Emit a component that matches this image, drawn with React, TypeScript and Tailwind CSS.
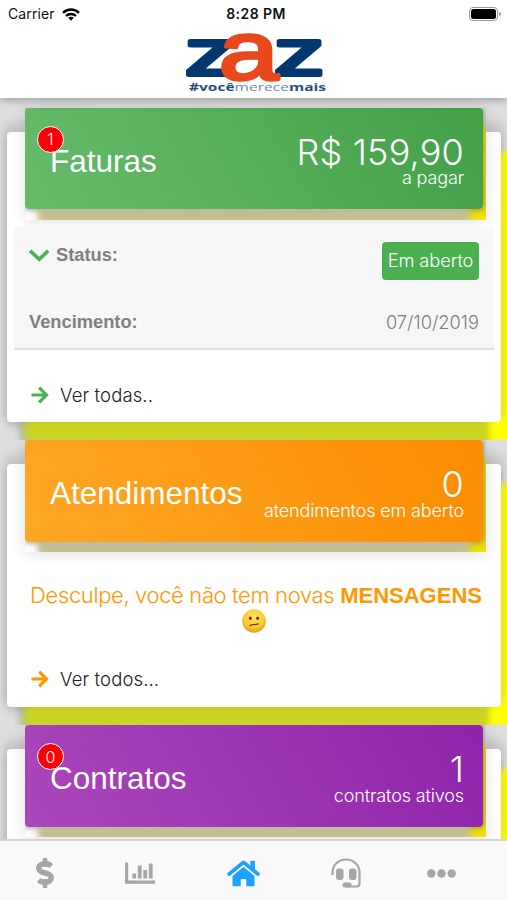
import type { ReactNode } from "react";
import { FaDollarSign, FaHome } from "react-icons/fa";

interface BannerProps {
  titulo: string;
  valor: string;
  legenda: string;
  cor: string;
  badge?: string;
}

function Banner({ titulo, valor, legenda, cor, badge }: BannerProps) {
  return (
    <div className="-mt-6 ml-[18px] h-28 w-[461px] shrink-0 overflow-hidden shadow-[0_2px_14px_rgba(0,0,0,0.12)]">
      <div
        className={`relative flex h-[101.5px] w-[458px] items-start justify-between rounded-[4px] pr-[19px] pl-[25px] text-white shadow-[0_27px_7px_-13px_rgba(192,188,156,0.97),0_0_5px_2px_rgba(110,110,110,0.5),15px_16px_6px_-2px_#f0e000] ${cor}`}
      >
        <h2 className="mt-[34px] text-[31.5px] leading-[38px]">{titulo}</h2>
        <div className="mt-[22px] flex flex-col items-end font-['Inter','Liberation_Sans',sans-serif] font-light">
          <span className="text-[36px] leading-[44px] tracking-[0.2px]">{valor}</span>
          <span className="-mt-[6.5px] text-[18px] leading-[22px] tracking-[-0.14px]">{legenda}</span>
        </div>
        {badge && (
          <span className="absolute top-[18px] left-[12px] flex size-[27px] items-center justify-center rounded-full border border-white bg-[#fb0007] font-['Inter','Liberation_Sans',sans-serif] text-[16px] font-light">
            {badge}
          </span>
        )}
      </div>
    </div>
  );
}

function Card({ className, children }: { className: string; children: ReactNode }) {
  return (
    <div
      className={`mr-[6px] ml-[7px] flex flex-col rounded-[4px] bg-white shadow-[0_34px_6px_-12px_rgba(125,145,85,0.4),0_-6px_7px_4px_rgba(120,100,130,0.17),18px_20px_6px_0px_#ffff00,0_4px_10px_rgba(0,0,0,0.16)] ${className}`}
    >
      {children}
    </div>
  );
}

function VerMais({ cor, children }: { cor: string; children: ReactNode }) {
  return (
    <a className="flex items-center pl-6 font-['Inter','Liberation_Sans',sans-serif] text-[18.5px] leading-6 font-light tracking-[0.12px] text-[#222]">
      <svg className={`mr-[11px] h-[18px] w-[18px] ${cor}`} viewBox="0 0 18 18" fill="none" stroke="currentColor" strokeWidth="3.2">
        <path d="M0.5 9H15.5M8.2 1.7L15.5 9L8.2 16.3" />
      </svg>
      {children}
    </a>
  );
}

function Logo() {
  return (
    <svg className="mx-auto h-[66px] w-[150px] overflow-visible" viewBox="0 0 150 66">
      <g fontFamily="'Liberation Sans', sans-serif" strokeLinejoin="round">
        <text transform="translate(6 46.9) scale(1.55 1)" fontSize="65" fill="#04376f" stroke="#04376f" strokeWidth="4">
          z
        </text>
        <text transform="translate(95 46.9) scale(1.55 1)" fontSize="65" fill="#04376f" stroke="#04376f" strokeWidth="4">
          z
        </text>
        <text transform="translate(40 51.3) scale(1.3 1)" fontSize="82" fill="#e8481c" stroke="#e8481c" strokeWidth="3.6">
          a
        </text>
      </g>
      <text x="10" y="63" fontFamily="'Open Sans', sans-serif" fontSize="11" fill="#2b4c80" textLength="137" lengthAdjust="spacingAndGlyphs">
        <tspan fontWeight="bold">#você</tspan>
        <tspan fill="#7288ab">merece</tspan>
        <tspan fontWeight="bold">mais</tspan>
      </text>
    </svg>
  );
}

function Confuso() {
  return (
    <svg className="mr-[4px] size-6" viewBox="0 0 24 24">
      <defs>
        <radialGradient id="rosto" cx="50%" cy="35%" r="65%">
          <stop offset="0" stopColor="#ffe75c" />
          <stop offset="0.65" stopColor="#fdca35" />
          <stop offset="1" stopColor="#e79a14" />
        </radialGradient>
      </defs>
      <circle cx="12" cy="12" r="11.8" fill="url(#rosto)" />
      <ellipse cx="8.3" cy="9.2" rx="1.4" ry="1.8" fill="#5b3511" />
      <ellipse cx="15.6" cy="9.2" rx="1.4" ry="1.8" fill="#5b3511" />
      <path d="M7.8 16.7C10 14.9 13 16.2 16.3 14.9" fill="none" stroke="#6b3d11" strokeWidth="1.2" strokeLinecap="round" />
    </svg>
  );
}

export default function App() {
  return (
    <div className="flex h-[900px] w-[507px] flex-col overflow-hidden bg-[#dedede] font-['Liberation_Sans',Arial,sans-serif]">
      <header className="z-10 h-[98px] shrink-0 bg-white shadow-[0_1px_9px_rgba(0,0,0,0.35)]">
        <div className="flex h-[28px] items-center justify-between px-2 font-['Inter',sans-serif] text-[14px] leading-[18px] text-[#111]">
          <div className="flex flex-1 items-center gap-[7px]">
            <span className="tracking-[0.1px]">Carrier</span>
            <svg className="h-[13px] w-[18px]" viewBox="0 0 18 13" fill="none" stroke="#000" strokeWidth="2.4">
              <path d="M1 4.8C5.5 0.4 12.5 0.4 17 4.8" />
              <path d="M4 8C6.8 5.3 11.2 5.3 14 8" />
              <path d="M6.2 9.8C7.8 8.4 10.2 8.4 11.8 9.8L9 12.8Z" fill="#000" stroke="none" />
            </svg>
          </div>
          <span className="ml-[3px] font-semibold tracking-[0.45px] whitespace-nowrap">8:28 PM</span>
          <div className="-mr-[2px] flex flex-1 items-center justify-end gap-px">
            <div className="h-[14px] w-[29px] rounded-[4px] border border-[#999] p-px">
              <div className="h-full rounded-[2.5px] bg-black" />
            </div>
            <div className="h-1 w-[2px] rounded-r-full bg-[#999]" />
          </div>
        </div>
        <Logo />
      </header>

      <main className="flex flex-1 flex-col overflow-hidden">
        <section className="h-[342px] shrink-0 overflow-hidden pt-[33.5px]">
          <Card className="h-[290.5px]">
            <Banner
              titulo="Faturas"
              valor="R$ 159,90"
              legenda="a pagar"
              badge="1"
              cor="bg-[linear-gradient(60deg,#66bb6a,#43a047)]"
            />
            <div className="mx-[7px] mt-[7px] flex h-[123px] flex-col border-b-2 border-[#e0e0e0] bg-[#f7f7f7] px-[15px] text-[18.3px] text-[#808080]">
              <div className="flex h-[76.5px] items-start justify-between pt-[15.5px]">
                <div className="flex items-center pt-[2px] leading-[22px] font-bold">
                  <svg className="mr-[6px] h-[13px] w-[21px] text-[#4caf50]" viewBox="0 0 21 13" fill="none" stroke="currentColor" strokeWidth="3.6">
                    <path d="M1.2 1.8L10.2 10.3L19.2 1.8" />
                  </svg>
                  Status:
                </div>
                <span className="flex h-[38px] w-[97px] items-center justify-center rounded-[4px] bg-[#4caf50] font-['Inter','Liberation_Sans',sans-serif] font-light tracking-[-0.1px] whitespace-nowrap text-white">
                  Em aberto
                </span>
              </div>
              <div className="flex items-center justify-between pt-[7.5px] leading-[22px]">
                <span className="font-bold">Vencimento:</span>
                <span className="font-['Inter','Liberation_Sans',sans-serif] font-light tracking-[0px]">07/10/2019</span>
              </div>
            </div>
            <div className="mt-[33px]">
              <VerMais cor="text-[#4caf50]">Ver todas..</VerMais>
            </div>
          </Card>
        </section>

        <section className="h-[285px] shrink-0 overflow-hidden pt-6">
          <Card className="h-[243px]">
            <Banner
              titulo="Atendimentos"
              valor="0"
              legenda="atendimentos em aberto"
              cor="bg-[linear-gradient(60deg,#ffa726,#fb8c00)]"
            />
            <div className="mt-[30px] flex flex-col items-center pl-[4px] text-[22px] leading-[27px] text-[#ff9800]">
              <p className="whitespace-nowrap">
                <span className="font-['Inter','Liberation_Sans',sans-serif] font-light tracking-[-0.37px]">
                  Desculpe, você não tem novas{" "}
                </span>
                <strong>MENSAGENS</strong>
              </p>
              <Confuso />
            </div>
            <div className="mt-[34px]">
              <VerMais cor="text-[#ff9800]">Ver todos...</VerMais>
            </div>
          </Card>
        </section>

        <section className="h-[285px] shrink-0 overflow-hidden pt-6">
          <Card className="h-[243px]">
            <Banner
              titulo="Contratos"
              valor="1"
              legenda="contratos ativos"
              badge="0"
              cor="bg-[linear-gradient(60deg,#ab47bc,#8e24aa)]"
            />
          </Card>
        </section>
      </main>

      <nav className="flex h-[61px] shrink-0 items-center gap-[65px] border-t-2 border-[#d2d2d2] bg-[#fafafa] pt-[5px] pl-[30px] text-[#a6a6a6]">
        <FaDollarSign className="size-[30px] shrink-0" stroke="currentColor" strokeWidth="16" />
        <svg className="h-[22px] w-[30px] shrink-0" viewBox="0 0 30 22" fill="currentColor">
          <path d="M0 0.5H3.2V18.6H30V21.8H0Z" />
          <rect x="7.3" y="11.5" width="3.8" height="5" />
          <rect x="12.8" y="3.5" width="3.8" height="13" />
          <rect x="18.3" y="8" width="3.8" height="8.5" />
          <rect x="23.8" y="1.5" width="3.8" height="15" />
        </svg>
        <FaHome className="mx-[7px] size-[33px] shrink-0 text-[#1ea1ff]" />
        <svg className="-mr-px -ml-px h-[30px] w-[30px] shrink-0" viewBox="0 0 30 30" fill="none" stroke="currentColor" strokeWidth="2.2">
          <path d="M1.5 17V14.5C1.5 7 7.5 1.5 15 1.5S28.5 7 28.5 14.5V25.5A3 3 0 0 1 25.5 28.5H15" />
          <rect x="5" y="10.5" width="7.5" height="11.5" rx="3" fill="currentColor" stroke="none" />
          <rect x="18" y="10.5" width="7.5" height="11.5" rx="3" fill="currentColor" stroke="none" />
          <rect x="11.5" y="24.4" width="9" height="5.2" rx="2.5" fill="currentColor" stroke="none" />
        </svg>
        <svg className="ml-[2px] h-[9px] w-[29px] shrink-0" viewBox="0 0 29 9" fill="currentColor">
          <circle cx="4.3" cy="4.5" r="4.2" />
          <circle cx="14.5" cy="4.5" r="4.2" />
          <circle cx="24.7" cy="4.5" r="4.2" />
        </svg>
      </nav>
    </div>
  );
}
